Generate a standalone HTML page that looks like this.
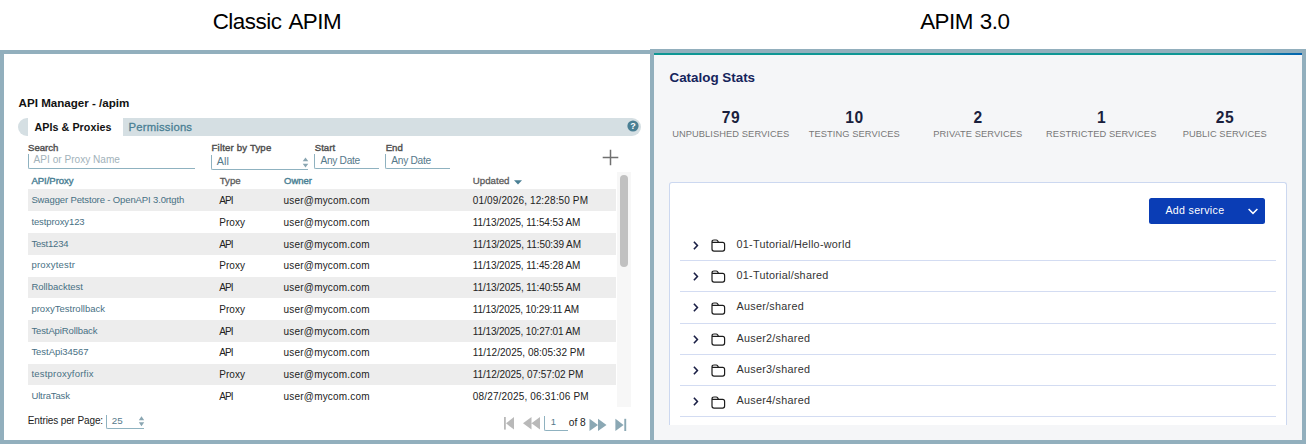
<!DOCTYPE html>
<html><head><meta charset="utf-8"><title>Classic APIM vs APIM 3.0</title>
<style>
*{box-sizing:border-box;margin:0;padding:0}
html,body{width:1308px;height:446px;background:#fff;overflow:hidden}
body{position:relative;font-family:"Liberation Sans",sans-serif;color:#222}
.abs,.abs *{position:absolute;white-space:nowrap}
.h{position:absolute;top:8.7px;font-size:22.4px;letter-spacing:-.5px;word-spacing:2.6px;line-height:26px;color:#000;white-space:nowrap}
/* frames */
#lf{position:absolute;left:0;top:50px;width:654px;height:394px;border:4px solid #92afbd;border-right:none;background:#fff}
#rf{position:absolute;left:650px;top:49px;width:656px;height:395px;border:4px solid #92afbd;background:#f5f6f8}
#grad{position:absolute;left:654px;top:53px;width:648px;height:2px;background:linear-gradient(to right,#0e9694 0%,#0e9694 84%,#0b86a0 93%,#0462b0 100%)}
.t{position:absolute;white-space:nowrap;line-height:14px}
.row{position:absolute;left:28px;width:588px;height:21.75px}
.g{background:#ededed}
.row span{position:absolute;top:.5px;line-height:21.75px;white-space:nowrap}
.c1{left:3.4px;font-size:9.5px;letter-spacing:-.14px;color:#487084;margin-top:-.8px}
.c2{left:191.3px;font-size:10px;color:#222}
.c3{left:255.6px;font-size:10px;letter-spacing:.19px;color:#222}
.c4{left:444.8px;font-size:10px;color:#222}
.lbl{font-weight:normal;font-size:9.6px;color:#4f4f4f;-webkit-text-stroke:.4px #4f4f4f}
.inp{position:absolute;border-left:1px solid #8fb2c0;border-bottom:1px solid #8fb2c0;border-bottom-left-radius:2px}
.srow{position:absolute;left:680px;width:596px;height:31.3px;border-bottom:1px solid #d3dcf2}
.srow span{position:absolute;left:56.5px;top:0;line-height:29.4px;font-size:10.8px;letter-spacing:.27px;color:#333;white-space:nowrap}
.srow svg{position:absolute}
.stat{position:absolute;top:108.4px;width:123.5px;text-align:center}
.stat b{display:block;font-size:15.6px;line-height:20px;color:#1a1f3d;letter-spacing:.7px;text-indent:.7px}
.stat i{display:block;font-style:normal;font-size:9.3px;line-height:12px;color:#777;letter-spacing:.08px;margin-top:-0.4px;white-space:nowrap}
</style></head><body>
<div class="h" id="h1" style="left:212.7px">Classic APIM</div>
<div class="h" id="h2" style="left:920.2px;word-spacing:1.2px">APIM 3.0</div>

<div id="lf"></div>
<div id="rf"></div>
<div id="grad"></div>

<!-- LEFT PANEL -->
<div class="t" id="ttl" style="left:18.6px;top:95.5px;font-size:11.6px;font-weight:bold;color:#111">API Manager - /apim</div>
<div style="position:absolute;left:18px;top:118px;width:622.6px;height:18px;border-radius:9px;background:#d5dfe3"></div>
<div style="position:absolute;left:28px;top:118px;width:95px;height:18px;background:#fff"></div>
<div class="t" id="tab1" style="left:34.5px;top:119.6px;font-size:10.7px;letter-spacing:.07px;font-weight:bold;color:#111">APIs &amp; Proxies</div>
<div class="t" id="tab2" style="left:128.5px;top:119.5px;font-size:11.3px;color:#4a7f94;letter-spacing:.2px;-webkit-text-stroke:.3px #4a7f94">Permissions</div>
<svg style="position:absolute;left:626.5px;top:120.3px" width="12" height="12" viewBox="0 0 12 12"><circle cx="6" cy="6" r="5.6" fill="#4a7f94"/><text x="6" y="9.2" text-anchor="middle" font-family="Liberation Sans, sans-serif" font-weight="bold" font-size="9" fill="#fff">?</text></svg>

<div class="t lbl" id="l1" style="left:28px;top:141px">Search</div>
<div class="inp" style="left:28px;top:154px;width:166.6px;height:15px"></div>
<div class="t" id="ph1" style="left:33.6px;top:152.6px;font-size:10.1px;color:#a2b2ba">API or Proxy Name</div>

<div class="t lbl" id="l2" style="left:211.6px;top:141px;letter-spacing:.17px">Filter by Type</div>
<div class="inp" style="left:211.2px;top:155px;width:96.4px;height:15px"></div>
<div class="t" style="left:216.8px;top:154.4px;font-size:10.8px;color:#55798a">All</div>
<svg style="position:absolute;left:301.5px;top:156.5px" width="7" height="11" viewBox="0 0 7 11"><path d="M3.5 0.5 L6.3 4.3 H0.7Z M3.5 10.5 L6.3 6.7 H0.7Z" fill="#8aa6b2"/></svg>

<div class="t lbl" style="left:314.8px;top:141px">Start</div>
<div class="inp" style="left:314.4px;top:154px;width:64.3px;height:15px"></div>
<div class="t" id="ad1" style="left:320.4px;top:154.2px;font-size:10.2px;letter-spacing:-.3px;color:#55798a">Any Date</div>

<div class="t lbl" style="left:385.7px;top:141px">End</div>
<div class="inp" style="left:385.2px;top:154px;width:64.5px;height:15px"></div>
<div class="t" style="left:391.3px;top:154.2px;font-size:10.2px;letter-spacing:-.3px;color:#55798a">Any Date</div>

<svg style="position:absolute;left:602px;top:148.5px" width="17" height="17" viewBox="0 0 17 17"><path d="M8.5 0.7V16.3M0.7 8.5H16.3" stroke="#707070" stroke-width="1.5" fill="none"/></svg>

<div class="t" style="left:31.4px;top:173.5px;font-size:9.6px;letter-spacing:-.05px;-webkit-text-stroke:.4px #4a7f94;color:#4a7f94">API/Proxy</div>
<div class="t" style="left:219.7px;top:173.5px;font-size:9.7px;-webkit-text-stroke:.3px #5c5c5c;color:#5c5c5c">Type</div>
<div class="t" style="left:284px;top:173.5px;font-size:9.5px;-webkit-text-stroke:.4px #4a7f94;color:#4a7f94">Owner</div>
<div class="t" id="upd" style="left:472.8px;top:173.5px;font-size:9.7px;-webkit-text-stroke:.3px #5c5c5c;color:#5c5c5c">Updated</div>
<svg style="position:absolute;left:513.5px;top:179.5px" width="8" height="5" viewBox="0 0 8 5"><path d="M0 0.3H8L4 4.6Z" fill="#4a7f94"/></svg>

<div class="row g" style="top:189.2px;height:22px"><span class="c1" style="letter-spacing:-0.131px">Swagger Petstore - OpenAPI 3.0rtgth</span><span class="c2" style="letter-spacing:-0.961px">API</span><span class="c3">user@mycom.com</span><span class="c4" style="letter-spacing:0.131px">01/09/2026, 12:28:50 PM</span></div>
<div class="row" style="top:211.25px"><span class="c1" style="letter-spacing:-0.109px">testproxy123</span><span class="c2" style="letter-spacing:0.035px">Proxy</span><span class="c3">user@mycom.com</span><span class="c4" style="letter-spacing:-0.126px">11/13/2025, 11:54:53 AM</span></div>
<div class="row g" style="top:233px"><span class="c1" style="letter-spacing:-0.208px">Test1234</span><span class="c2" style="letter-spacing:-0.961px">API</span><span class="c3">user@mycom.com</span><span class="c4" style="letter-spacing:-0.094px">11/13/2025, 11:50:39 AM</span></div>
<div class="row" style="top:254.75px"><span class="c1" style="letter-spacing:0.210px">proxytestr</span><span class="c2" style="letter-spacing:0.035px">Proxy</span><span class="c3">user@mycom.com</span><span class="c4" style="letter-spacing:-0.126px">11/13/2025, 11:45:28 AM</span></div>
<div class="row g" style="top:276.5px"><span class="c1" style="letter-spacing:-0.013px">Rollbacktest</span><span class="c2" style="letter-spacing:-0.961px">API</span><span class="c3">user@mycom.com</span><span class="c4" style="letter-spacing:-0.108px">11/13/2025, 11:40:55 AM</span></div>
<div class="row" style="top:298.25px"><span class="c1" style="letter-spacing:0.014px">proxyTestrollback</span><span class="c2" style="letter-spacing:0.035px">Proxy</span><span class="c3">user@mycom.com</span><span class="c4" style="letter-spacing:-0.181px">11/13/2025, 10:29:11 AM</span></div>
<div class="row g" style="top:320px"><span class="c1" style="letter-spacing:-0.106px">TestApiRollback</span><span class="c2" style="letter-spacing:-0.961px">API</span><span class="c3">user@mycom.com</span><span class="c4" style="letter-spacing:-0.160px">11/13/2025, 10:27:01 AM</span></div>
<div class="row" style="top:341.75px"><span class="c1" style="letter-spacing:-0.043px">TestApi34567</span><span class="c2" style="letter-spacing:-0.961px">API</span><span class="c3">user@mycom.com</span><span class="c4" style="letter-spacing:0.019px">11/12/2025, 08:05:32 PM</span></div>
<div class="row g" style="top:363.5px"><span class="c1" style="letter-spacing:0.212px">testproxyforfix</span><span class="c2" style="letter-spacing:0.035px">Proxy</span><span class="c3">user@mycom.com</span><span class="c4" style="letter-spacing:-0.049px">11/12/2025, 07:57:02 PM</span></div>
<div class="row" style="top:385.25px"><span class="c1" style="letter-spacing:-0.123px">UltraTask</span><span class="c2" style="letter-spacing:-0.961px">API</span><span class="c3">user@mycom.com</span><span class="c4" style="letter-spacing:0.159px">08/27/2025, 06:31:06 PM</span></div>

<!-- scrollbar -->
<div style="position:absolute;left:617px;top:172px;width:14px;height:235px;background:#f7f7f7"></div>
<div style="position:absolute;left:620px;top:175.3px;width:8px;height:92.2px;border-radius:4px;background:#c1c1c1"></div>

<!-- footer -->
<div class="t" id="epp" style="left:27.8px;top:414px;font-size:10px;letter-spacing:-.12px;color:#222">Entries per Page:</div>
<div class="inp" style="left:105.8px;top:414.5px;width:38.6px;height:14.5px"></div>
<div class="t" style="left:111.7px;top:413.5px;font-size:9.8px;color:#55798a">25</div>
<svg style="position:absolute;left:138.2px;top:416px" width="7" height="11" viewBox="0 0 7 11"><path d="M3.5 0.3 L6.2 4.2 H0.8Z M3.5 10.2 L6.2 6.3 H0.8Z" fill="#8aa6b2"/></svg>

<svg style="position:absolute;left:503px;top:416px" width="126" height="16" viewBox="0 0 126 16">
<g fill="#b9b9b9"><rect x="1" y="1" width="1.8" height="12.6"/><path d="M11 1V13.6L3 7.3Z"/><path d="M28.5 1V13.6L20 7.3Z M37 1V13.6L28.5 7.3Z"/></g>
<g fill="#8ba8b4"><path d="M86.5 2.8V15L95 8.9Z M95 2.8V15L103.5 8.9Z"/><path d="M112.4 2.8V15L120.6 8.9Z"/><rect x="121.3" y="2.8" width="1.9" height="12.2"/></g>
</svg>
<div class="inp" style="left:544.2px;top:415.5px;width:24px;height:15.2px"></div>
<div class="t" style="left:550.8px;top:415.3px;font-size:9.4px;color:#55798a">1</div>
<div class="t" id="of8" style="left:568.8px;top:415.5px;font-size:10.2px;color:#222">of 8</div>

<!-- RIGHT PANEL -->
<div class="t" id="cs" style="left:669.5px;top:70px;font-size:13.4px;line-height:16px;font-weight:bold;color:#15245c">Catalog Stats</div>
<div class="stat" style="left:669px"><b>79</b><i id="s1">UNPUBLISHED SERVICES</i></div>
<div class="stat" style="left:792.5px"><b>10</b><i>TESTING SERVICES</i></div>
<div class="stat" style="left:916px"><b>2</b><i>PRIVATE SERVICES</i></div>
<div class="stat" style="left:1039.5px"><b>1</b><i>RESTRICTED SERVICES</i></div>
<div class="stat" style="left:1163px"><b>25</b><i>PUBLIC SERVICES</i></div>

<div style="position:absolute;left:669px;top:182px;width:618px;height:242.6px;background:#fff;border:1px solid #ccd8f0;border-bottom:none;border-radius:3px 3px 0 0"></div>
<div style="position:absolute;left:1149px;top:198px;width:116px;height:26px;background:#0a3db5;border-radius:2.5px"></div>
<div class="t" id="add" style="left:1165.4px;top:203.2px;font-size:10.6px;color:#fff;letter-spacing:.33px">Add service</div>
<svg style="position:absolute;left:1246.5px;top:206.5px" width="12" height="9" viewBox="0 0 12 9"><path d="M1.6 2 L6 6.4 L10.4 2" stroke="#fff" stroke-width="1.5" fill="none"/></svg>

<div class="srow" style="top:229.7px"><svg class="chev" style="left:12px;top:10.2px" width="8" height="11" viewBox="0 0 8 11"><path d="M1.9 1.7L5.4 5.5L1.9 9.3" stroke="#1a1f45" stroke-width="1.6" fill="none"/></svg><svg style="left:31.1px;top:9.4px" width="15" height="14" viewBox="0 0 15 14"><path d="M1 3V10.1Q1 12.1 3 12.1H11.6Q13.6 12.1 13.6 10.1V5.4Q13.6 3.4 11.6 3.4H7.6L6.6 1.8Q6.1 1 5.2 1H3Q1 1 1 3Z M1 3.4H7.6" stroke="#1c1c1c" stroke-width="1.2" fill="none" stroke-linejoin="round"/></svg><span id="r1">01-Tutorial/Hello-world</span></div>
<div class="srow" style="top:261px"><svg class="chev" style="left:12px;top:10.2px" width="8" height="11" viewBox="0 0 8 11"><path d="M1.9 1.7L5.4 5.5L1.9 9.3" stroke="#1a1f45" stroke-width="1.6" fill="none"/></svg><svg style="left:31.1px;top:9.4px" width="15" height="14" viewBox="0 0 15 14"><path d="M1 3V10.1Q1 12.1 3 12.1H11.6Q13.6 12.1 13.6 10.1V5.4Q13.6 3.4 11.6 3.4H7.6L6.6 1.8Q6.1 1 5.2 1H3Q1 1 1 3Z M1 3.4H7.6" stroke="#1c1c1c" stroke-width="1.2" fill="none" stroke-linejoin="round"/></svg><span>01-Tutorial/shared</span></div>
<div class="srow" style="top:292.3px"><svg class="chev" style="left:12px;top:10.2px" width="8" height="11" viewBox="0 0 8 11"><path d="M1.9 1.7L5.4 5.5L1.9 9.3" stroke="#1a1f45" stroke-width="1.6" fill="none"/></svg><svg style="left:31.1px;top:9.4px" width="15" height="14" viewBox="0 0 15 14"><path d="M1 3V10.1Q1 12.1 3 12.1H11.6Q13.6 12.1 13.6 10.1V5.4Q13.6 3.4 11.6 3.4H7.6L6.6 1.8Q6.1 1 5.2 1H3Q1 1 1 3Z M1 3.4H7.6" stroke="#1c1c1c" stroke-width="1.2" fill="none" stroke-linejoin="round"/></svg><span>Auser/shared</span></div>
<div class="srow" style="top:323.6px"><svg class="chev" style="left:12px;top:10.2px" width="8" height="11" viewBox="0 0 8 11"><path d="M1.9 1.7L5.4 5.5L1.9 9.3" stroke="#1a1f45" stroke-width="1.6" fill="none"/></svg><svg style="left:31.1px;top:9.4px" width="15" height="14" viewBox="0 0 15 14"><path d="M1 3V10.1Q1 12.1 3 12.1H11.6Q13.6 12.1 13.6 10.1V5.4Q13.6 3.4 11.6 3.4H7.6L6.6 1.8Q6.1 1 5.2 1H3Q1 1 1 3Z M1 3.4H7.6" stroke="#1c1c1c" stroke-width="1.2" fill="none" stroke-linejoin="round"/></svg><span>Auser2/shared</span></div>
<div class="srow" style="top:354.9px"><svg class="chev" style="left:12px;top:10.2px" width="8" height="11" viewBox="0 0 8 11"><path d="M1.9 1.7L5.4 5.5L1.9 9.3" stroke="#1a1f45" stroke-width="1.6" fill="none"/></svg><svg style="left:31.1px;top:9.4px" width="15" height="14" viewBox="0 0 15 14"><path d="M1 3V10.1Q1 12.1 3 12.1H11.6Q13.6 12.1 13.6 10.1V5.4Q13.6 3.4 11.6 3.4H7.6L6.6 1.8Q6.1 1 5.2 1H3Q1 1 1 3Z M1 3.4H7.6" stroke="#1c1c1c" stroke-width="1.2" fill="none" stroke-linejoin="round"/></svg><span>Auser3/shared</span></div>
<div class="srow" style="top:386.2px"><svg class="chev" style="left:12px;top:10.2px" width="8" height="11" viewBox="0 0 8 11"><path d="M1.9 1.7L5.4 5.5L1.9 9.3" stroke="#1a1f45" stroke-width="1.6" fill="none"/></svg><svg style="left:31.1px;top:9.4px" width="15" height="14" viewBox="0 0 15 14"><path d="M1 3V10.1Q1 12.1 3 12.1H11.6Q13.6 12.1 13.6 10.1V5.4Q13.6 3.4 11.6 3.4H7.6L6.6 1.8Q6.1 1 5.2 1H3Q1 1 1 3Z M1 3.4H7.6" stroke="#1c1c1c" stroke-width="1.2" fill="none" stroke-linejoin="round"/></svg><span>Auser4/shared</span></div>
</body></html>
